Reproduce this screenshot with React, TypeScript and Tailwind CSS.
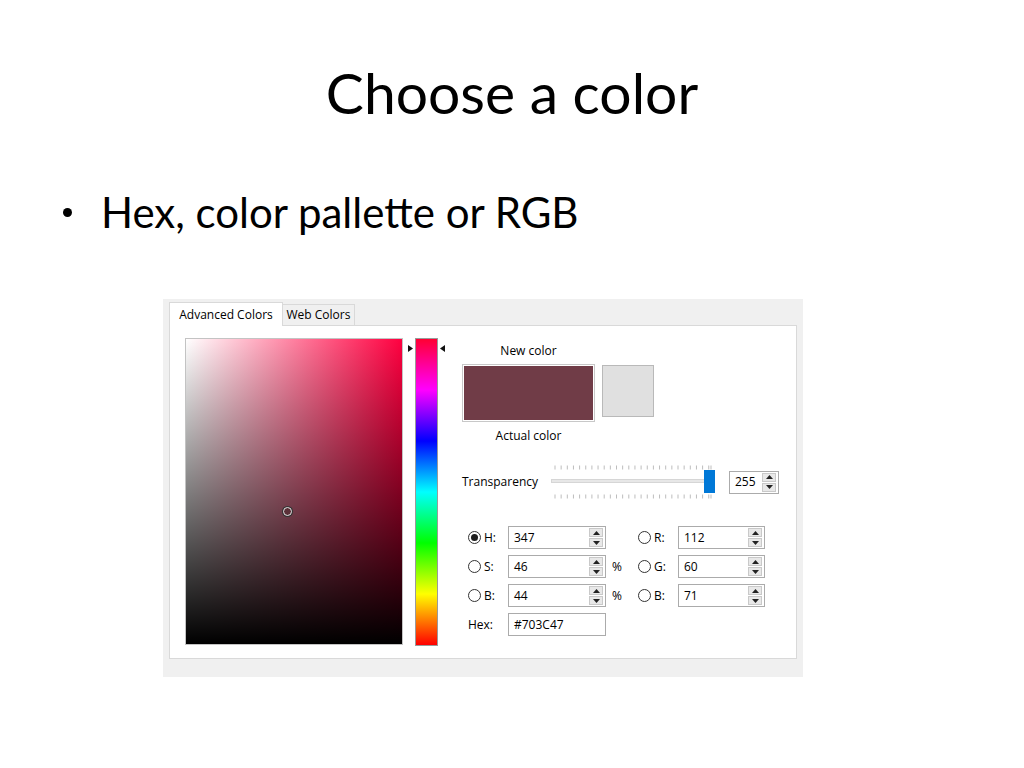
import React from "react";

const ui = "font-['Open_Sans',sans-serif] text-[12px] text-black";

function Arrow({ dir }: { dir: "up" | "down" }) {
  return (
    <svg width="7" height="4" viewBox="0 0 7 4">
      {dir === "up" ? <path d="M3.5 0L7 4H0z" fill="#222" /> : <path d="M0 0H7L3.5 4z" fill="#222" />}
    </svg>
  );
}

function Spin() {
  return (
    <div className="flex flex-col w-[14px] h-[19px] gap-px mr-[2px]">
      <div className="flex-1 bg-[#e8e8e8] border border-[#c9c9c9] flex items-center justify-center">
        <Arrow dir="up" />
      </div>
      <div className="flex-1 bg-[#e8e8e8] border border-[#c9c9c9] flex items-center justify-center">
        <Arrow dir="down" />
      </div>
    </div>
  );
}

function NumBox({ value, w, spin = true }: { value: string; w: string; spin?: boolean }) {
  return (
    <div className={`${w} h-[23px] border border-[#ababab] bg-white flex items-center justify-between`}>
      <span className="pl-[5px] leading-none">{value}</span>
      {spin && <Spin />}
    </div>
  );
}

function Radio({ checked = false }: { checked?: boolean }) {
  return (
    <div className="w-[13px] h-[13px] rounded-full border border-[#333] bg-white flex items-center justify-center shrink-0">
      {checked && <div className="w-[7px] h-[7px] rounded-full bg-[#1e1e1e]" />}
    </div>
  );
}

function Ticks() {
  const xs = Array.from({ length: 26 }, (_, i) => 4 + i * 6.15);
  return (
    <svg width="164" height="5" viewBox="0 0 164 5">
      {xs.map((x, i) => (
        <line key={i} x1={x} y1="0.5" x2={x} y2="4.5" stroke="#bdbdbd" strokeWidth="1" />
      ))}
      <line x1="160" y1="0.5" x2="160" y2="4.5" stroke="#bdbdbd" strokeWidth="1" />
    </svg>
  );
}

export default function App() {
  return (
    <div className="w-[1024px] h-[768px] bg-white overflow-hidden">
      <h1 className="pt-[64px] text-center font-['Lato',sans-serif] text-[57px] leading-none font-normal text-black">
        Choose a color
      </h1>

      <div className="mt-[70px] flex items-center h-[42px]">
        <div className="ml-[63px] w-[9px] h-[9px] rounded-full bg-black" />
        <span className="ml-[29px] font-['Lato',sans-serif] text-[42px] leading-none text-black">
          Hex, color pallette or RGB
        </span>
      </div>

      <div className={`${ui} ml-[163px] mt-[66px] w-[640px] h-[378px] bg-[#f0f0f0] pt-[3px] px-[6px]`}>
        {/* Tabs */}
        <div className="flex items-end h-[23px]">
          <div className="relative z-10 w-[114px] h-[24px] -mb-px bg-white border border-b-0 border-[#d9d9d9] flex items-center justify-center leading-none">
            Advanced Colors
          </div>
          <div className="w-[72px] h-[21px] bg-[#f0f0f0] border border-l-0 border-b-0 border-[#d9d9d9] flex items-center justify-center leading-none">
            Web Colors
          </div>
        </div>

        {/* Panel */}
        <div className="w-[628px] h-[334px] bg-white border border-[#d9d9d9] flex items-start">
          {/* SV square */}
          <div className="ml-[15px] mt-[12px] w-[218px] h-[307px] border border-[#c3c3c3] relative">
            <div className="w-full h-full bg-linear-to-r/srgb from-white to-[#ff0040]">
              <div className="w-full h-full bg-linear-to-t/srgb from-black to-[#00000000]" />
            </div>
            <div className="absolute left-[97px] top-[168px] w-[9px] h-[9px] rounded-full border-[1.5px] border-[#e6e6e6] bg-[#5a3038] ring-1 ring-[#333]" />
          </div>

          {/* Hue bar */}
          <div className="ml-[12px] mt-[12px] w-[23px] h-[308px] relative">
            <div className="w-full h-full border border-[#9a9a9a] bg-[linear-gradient(to_bottom,#ff0033,#ff00ff,#0000ff,#00ffff,#00ff00,#ffff00,#ff0000)]" />
            <svg className="absolute -left-[7px] top-[7px]" width="5" height="7" viewBox="0 0 5 7">
              <path d="M0 0L5 3.5L0 7z" fill="#111" />
            </svg>
            <svg className="absolute -right-[7px] top-[7px]" width="5" height="7" viewBox="0 0 5 7">
              <path d="M5 0L0 3.5L5 7z" fill="#111" />
            </svg>
          </div>

          {/* Right column */}
          <div className="ml-[24px] mt-[17px] flex flex-col">
            <div className="w-[133px] h-[16px] text-center leading-[16px]">New color</div>
            <div className="mt-[5px] flex items-start">
              <div className="w-[133px] h-[58px] border border-[#c8c8c8] p-px bg-white">
                <div className="w-full h-full bg-[#703c47]" />
              </div>
              <div className="ml-[7px] mt-px w-[52px] h-[52px] border border-[#b9b9b9] bg-[#e0e0e0]" />
            </div>
            <div className="mt-[6px] w-[133px] h-[16px] text-center leading-[16px]">Actual color</div>

            {/* Transparency */}
            <div className="mt-[21px] flex items-center h-[34px]">
              <div className="w-[89px] leading-none">Transparency</div>
              <div className="relative w-[164px] h-[34px] flex flex-col justify-between">
                <Ticks />
                <Ticks />
                <div className="absolute left-0 top-[14px] w-[156px] h-[4px] bg-[#e7e7e7] border border-[#d6d6d6]" />
                <div className="absolute left-[153px] top-[5px] w-[11px] h-[23px] bg-[#0078d7]" />
              </div>
              <div className="ml-[14px]">
                <NumBox value="255" w="w-[50px]" />
              </div>
            </div>

            {/* HSB / RGB */}
            <div className="mt-[27px] flex flex-col gap-[6px]">
              {[
                { a: "H:", av: "347", pct: false, b: "R:", bv: "112", checked: true },
                { a: "S:", av: "46", pct: true, b: "G:", bv: "60", checked: false },
                { a: "B:", av: "44", pct: true, b: "B:", bv: "71", checked: false },
              ].map((r) => (
                <div key={r.b} className="flex items-center h-[23px]">
                  <div className="w-[6px]" />
                  <Radio checked={r.checked} />
                  <div className="ml-[3px] w-[24px] leading-none">{r.a}</div>
                  <NumBox value={r.av} w="w-[98px]" />
                  <div className="w-[32px] pl-[6px] leading-none">{r.pct ? "%" : ""}</div>
                  <Radio />
                  <div className="ml-[3px] w-[24px] leading-none">{r.b}</div>
                  <NumBox value={r.bv} w="w-[87px]" />
                </div>
              ))}
              <div className="flex items-center h-[23px]">
                <div className="pl-[6px] w-[46px] leading-none">Hex:</div>
                <NumBox value="#703C47" w="w-[98px]" spin={false} />
              </div>
            </div>
          </div>
        </div>
      </div>
    </div>
  );
}
